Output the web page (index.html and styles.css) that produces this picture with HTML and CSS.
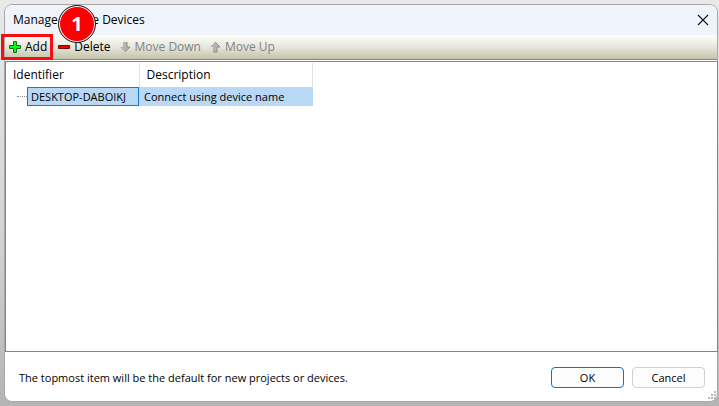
FILE: index.html
```html
<!DOCTYPE html>
<html lang="en">
  <head>
    <meta charset="UTF-8" />
    <meta name="viewport" content="width=device-width, initial-scale=1.0" />
    <title>Manage Mobile Devices</title>
    <link rel="stylesheet" href="styles.css">
  </head>
  <body>
    <div class="dialog">
      <div class="titlebar">
        <h1>Manage Mobile Devices</h1>
        <button class="close" aria-label="Close">
          <svg width="12" height="12" viewBox="0 0 12 12">
            <path d="M1 1L11 11M11 1L1 11" stroke="#1a1a1a" stroke-width="1.2" fill="none" />
          </svg>
        </button>
      </div>

      <div class="toolbar">
        <div class="highlight">
          <button class="tool">
            <svg width="12" height="12" viewBox="0 0 12 12">
              <path d="M4.5 .5h3v4h4v3h-4v4h-3v-4h-4v-3h4z" fill="#0cf51c" stroke="#087a10" />
            </svg>
            Add
          </button>
          <span class="step">1</span>
        </div>
        <button class="tool">
          <svg width="12" height="12" viewBox="0 0 12 12">
            <path d="M.5 4.5h11v3H.5z" fill="#f20000" stroke="#7d0808" />
          </svg>
          Delete
        </button>
        <button class="tool" disabled>
          <svg width="12" height="12" viewBox="0 0 12 12">
            <path d="M4 1h4v5h3L6 11 1 6h3z" fill="#b4b4b4" />
            <path d="M8 1v5h3L6 11" fill="none" stroke="#8c8c8c" />
          </svg>
          Move Down
        </button>
        <button class="tool" disabled>
          <svg width="12" height="12" viewBox="0 0 12 12">
            <path d="M6 1L11 6H8v5H4V6H1z" fill="#b4b4b4" />
            <path d="M6 1L11 6H8v5H4" fill="none" stroke="#8c8c8c" />
          </svg>
          Move Up
        </button>
      </div>

      <div class="list">
        <table class="devices">
          <thead>
            <tr>
              <th class="col-id">Identifier</th>
              <th class="col-desc">Description</th>
            </tr>
          </thead>
          <tbody>
            <tr>
              <td>
                <div class="node">
                  <span class="branch"></span>
                  <span class="name">DESKTOP-DABOIKJ</span>
                </div>
              </td>
              <td class="desc">Connect using device name</td>
            </tr>
          </tbody>
        </table>
      </div>

      <div class="footer">
        <p class="note">The topmost item will be the default for new projects or devices.</p>
        <button class="btn btn-default">OK</button>
        <button class="btn">Cancel</button>
        <svg class="grip" width="8" height="8" viewBox="0 0 8 8">
          <path d="M6 0h2v2H6zM3 3h2v2H3zM6 3h2v2H6zM0 6h2v2H0zM3 6h2v2H3zM6 6h2v2H6z" fill="#b8b8b8" />
        </svg>
      </div>
    </div>
  </body>
</html>
```

FILE: styles.css
```css
* {
  margin: 0;
  padding: 0;
  box-sizing: border-box;
}

body {
  min-height: 100vh;
  padding: 4px 1px 4px 4px;
  display: flex;
  background: linear-gradient(#e9e9e9, #d2d2d2 60%, #b4b4b4);
  font-family: "Open Sans", "Noto Sans", sans-serif;
  font-size: 12px;
  line-height: 16px;
  color: #000;
}

button {
  font: inherit;
  color: inherit;
  border: none;
  background: none;
}

.dialog {
  flex: 1;
  display: flex;
  flex-direction: column;
  position: relative;
  background: #fff;
  border: 1px solid #a8a8a8;
  border-radius: 8px;
}

.titlebar {
  height: 30px;
  padding: 0 7px 0 8px;
  display: flex;
  align-items: center;
  justify-content: space-between;
  background: #eff3fa;
  border-radius: 7px 7px 0 0;
}

.titlebar h1 {
  font-size: 12px;
  font-weight: 400;
}

.close {
  width: 13px;
  height: 16px;
  display: flex;
  align-items: center;
}

/* Toolbar */
.toolbar {
  height: 25px;
  padding-left: 4px;
  display: flex;
  align-items: center;
  gap: 8px;
  background: linear-gradient(#fefefb, #e6e6dc 50%, #c3c3ab);
  border-bottom: 1px solid #85838f;
}

.tool {
  display: flex;
  align-items: center;
  gap: 4px;
  white-space: nowrap;
}

.tool:disabled {
  color: #838383;
}

.highlight {
  position: relative;
  padding-right: 3px;
}

.highlight::after {
  content: "";
  position: absolute;
  inset: -5px -3px -5px -8px;
  border: 3px solid #fb0d0d;
  pointer-events: none;
}

.step {
  position: absolute;
  z-index: 1;
  left: 49px;
  top: -34px;
  width: 38px;
  height: 38px;
  border: 1px solid #222;
  border-radius: 50%;
  background: #fb0000;
  box-shadow: inset 0 0 0 1px #fff;
  color: #fff;
  font-size: 20px;
  font-weight: 700;
  line-height: 36px;
  text-align: center;
}

/* Device list */
.list {
  flex: 1;
  margin: 1px -1px 0 0;
  padding-top: 1px;
  border: 1px solid #85838f;
}

.devices {
  table-layout: fixed;
  width: 307px;
  border-collapse: collapse;
}

.devices th {
  height: 24px;
  padding-left: 7px;
  font-weight: 400;
  text-align: left;
  border-right: 1px solid #e2e2e2;
}

.devices .col-id {
  width: 133px;
}

.devices td {
  height: 19px;
  font-size: 11px;
}

.devices .desc {
  padding-left: 5px;
  background: #b9d8f5;
}

.node {
  display: flex;
  align-items: center;
  padding-left: 11px;
}

.branch {
  width: 10px;
  border-top: 1px dotted #909090;
}

.name {
  flex: 1;
  height: 19px;
  padding-left: 3px;
  line-height: 17px;
  background: #b9d8f5;
  border: 1px solid #1479cf;
}

/* Footer */
.footer {
  height: 49px;
  padding: 2px 12px 0 14px;
  display: flex;
  align-items: center;
  gap: 8px;
  font-size: 11px;
}

.note {
  flex: 1;
}

.btn {
  width: 73px;
  height: 21px;
  line-height: 18px;
  background: #fdfdfd;
  border: 1px solid #d0d0d0;
  border-radius: 4px;
}

.btn-default {
  border-color: #0078d4;
}

.grip {
  position: absolute;
  right: 1px;
  bottom: 2px;
}
```
